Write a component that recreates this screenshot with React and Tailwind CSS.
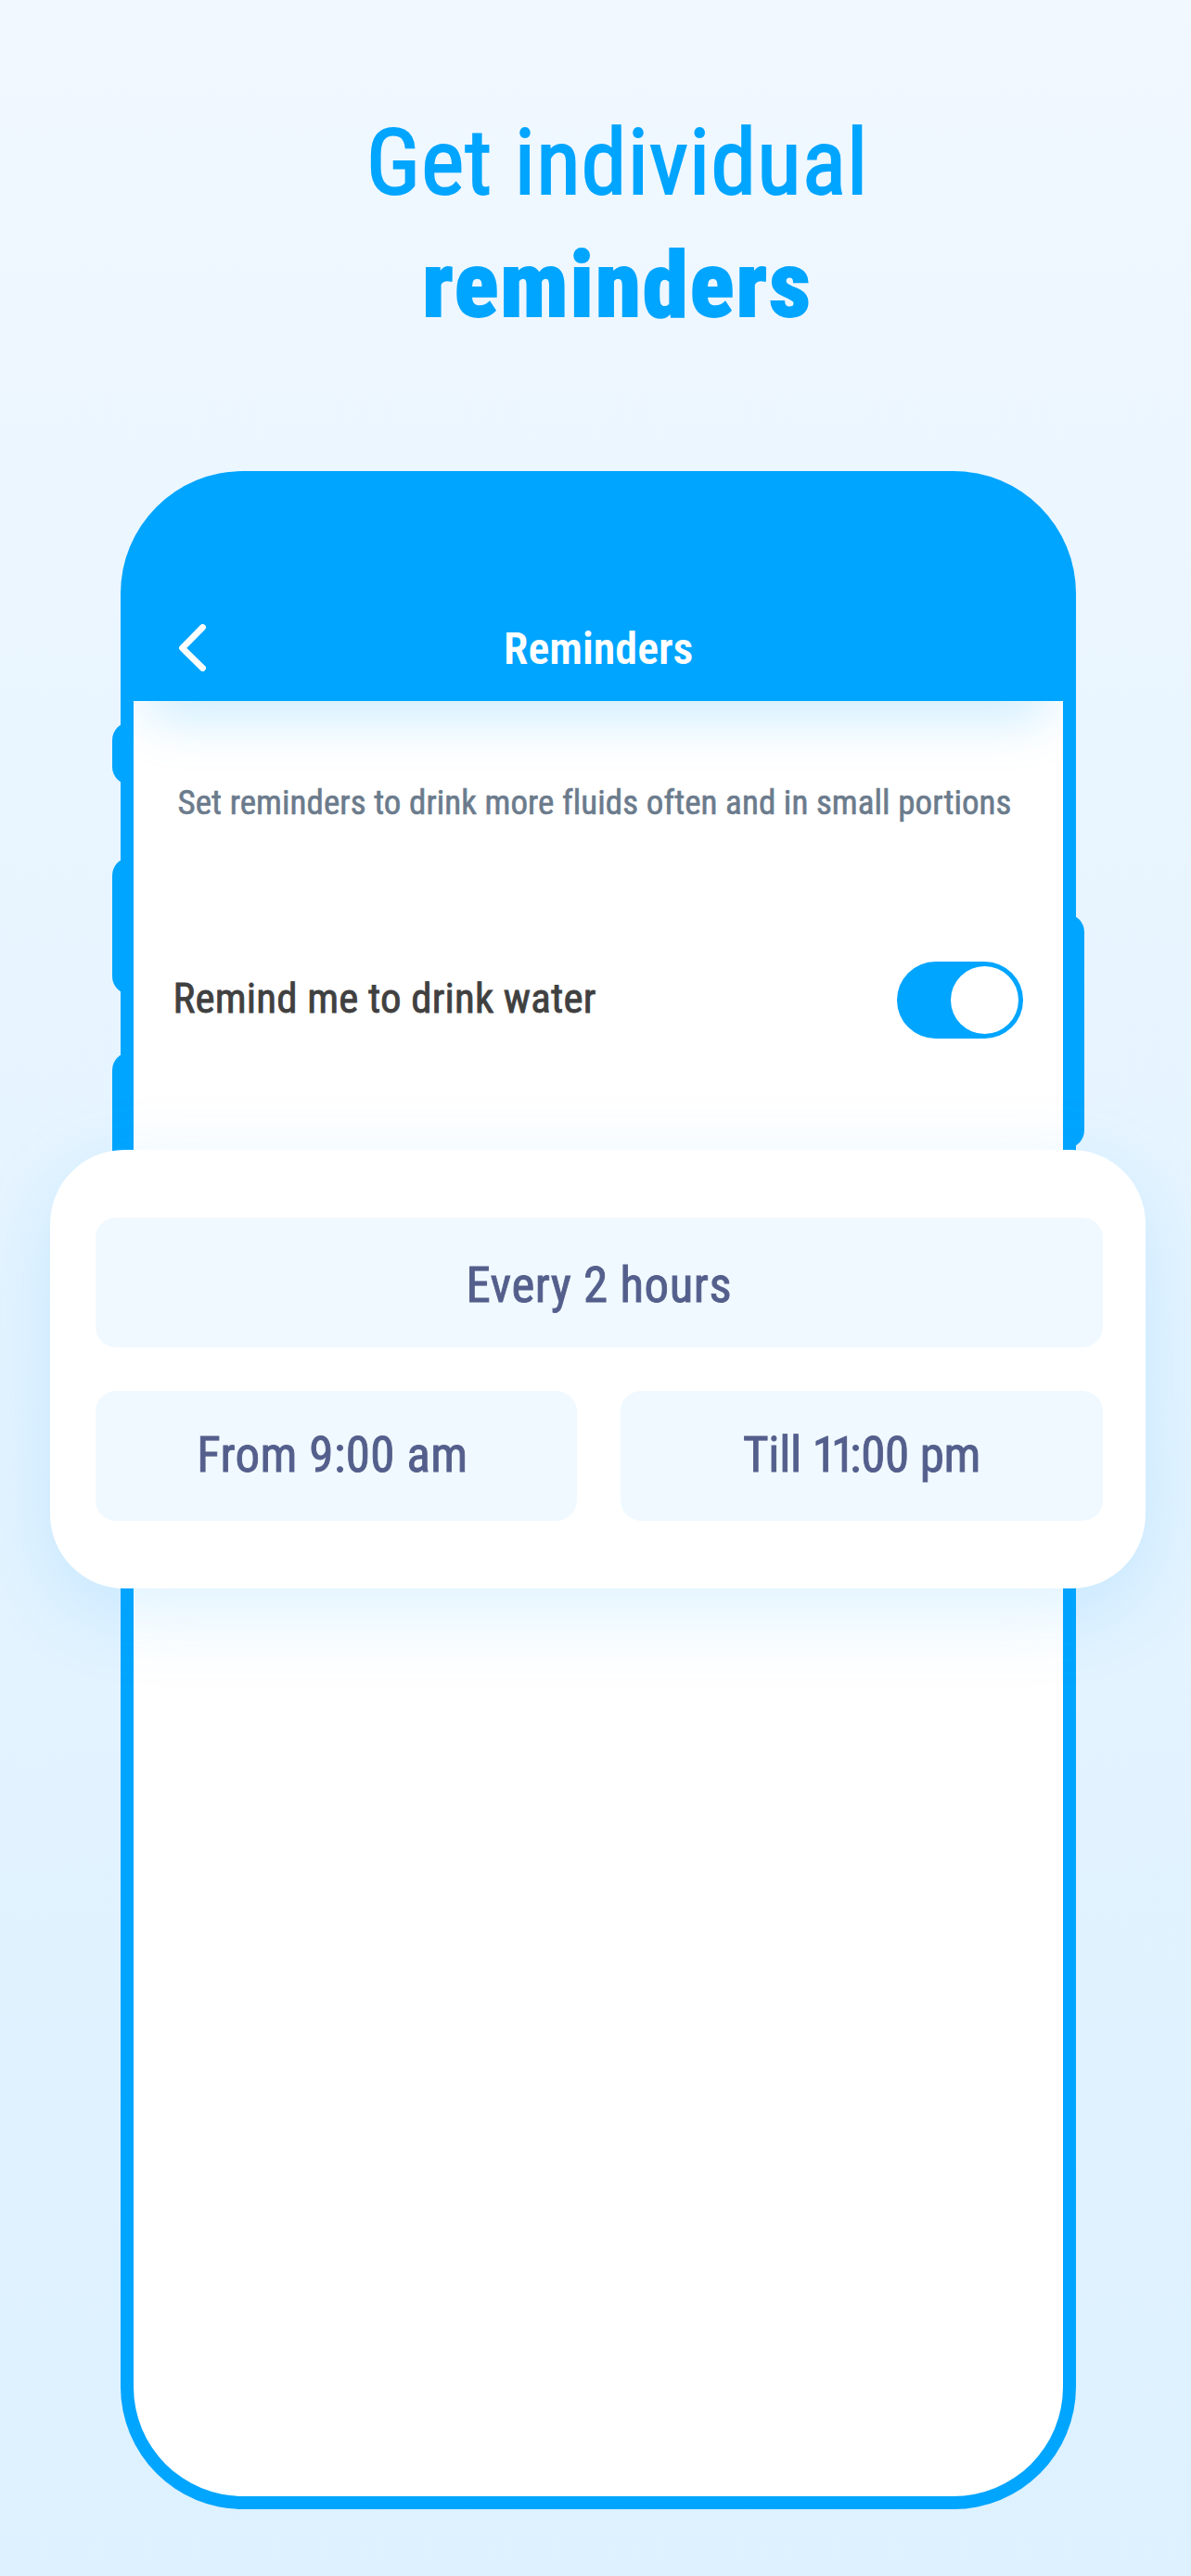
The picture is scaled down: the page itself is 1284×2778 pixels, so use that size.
import { useState } from 'react'

function SideButton({ className }) {
    return <span className={`absolute w-10 rounded-[19px] bg-[#00a5ff] ${className}`} />
}

function Field({ children, className = '' }) {
    return (
        <button className={`h-[140px] flex items-center justify-center rounded-[22px] bg-[#f0f9ff] text-[53px] font-normal text-[#545f8c] [-webkit-text-stroke:0.9px_#545f8c] ${className}`}>
            {children}
        </button>
    )
}

export default function App() {
    const [enabled, setEnabled] = useState(true)

    return (
        <div className="w-[1284px] h-[2778px] overflow-hidden bg-linear-to-b from-[#f1f8ff] via-[#e8f5ff] via-35% to-[#ddf1ff] font-['Roboto_Condensed','Roboto',sans-serif]">
            {/* Headline */}
            <h1 className="pt-[109px] pl-[47px] text-center text-[99px] leading-[132px] text-[#00a5ff] font-normal tracking-[0.7px] [-webkit-text-stroke:1.8px_#00a5ff]">
                Get individual
                <br />
                <span className="font-extrabold tracking-[2px]">reminders</span>
            </h1>

            {/* Phone */}
            <div className="relative mt-[135px] ml-[129.5px] w-[1030px] h-[2198px]">
                <SideButton className="-left-[8.5px] top-[271px] h-[67px]" />
                <SideButton className="-left-[8.5px] top-[417px] h-[147px]" />
                <SideButton className="-left-[8.5px] top-[627px] h-[149px]" />
                <SideButton className="-right-[9px] top-[478px] h-[252px]" />

                <div className="relative h-full flex flex-col rounded-[132px] bg-[#00a5ff] px-[14px] pb-[14.5px]">
                    <header className="h-[248px] flex flex-col justify-end pb-[26px]">
                        <div className="flex items-center h-[60px] pl-[49.5px] pr-[77px]">
                            <svg className="w-[29px] h-[51px] mb-[4px]" viewBox="0 0 29 51" fill="none" stroke="white" strokeWidth="6.8" strokeLinecap="round" strokeLinejoin="round">
                                <path d="M25.5 3.5L3.5 25.8L25.5 47.5" />
                            </svg>
                            <h2 className="flex-1 text-center text-[48px] leading-[60px] font-semibold text-white">Reminders</h2>
                        </div>
                    </header>

                    <main className="flex-1 rounded-b-[118px] bg-white">
                        <section className="relative h-[484px] overflow-hidden pt-[86px]">
                            <span className="absolute left-0 right-0 -top-24 h-24 shadow-[0_36px_56px_-16px_rgba(0,165,255,0.2)]" />
                            <p className="relative pr-[7px] text-center text-[37px] leading-[48px] tracking-[0.06px] text-[#6b7b8c] [-webkit-text-stroke:0.6px_#6b7b8c]">
                                Set reminders to drink more fluids often and in small portions
                            </p>
                            <div className="mt-[147px] flex items-center justify-between pl-[43px] pr-[42.5px]">
                                <span className="mb-[3px] text-[45px] leading-[60px] tracking-[0.15px] text-[#404040] [-webkit-text-stroke:0.8px_#404040]">Remind me to drink water</span>
                                <button
                                    onClick={() => setEnabled(!enabled)}
                                    className={`w-[136.5px] h-[83px] flex items-center rounded-full px-[5px] ${enabled ? 'justify-end bg-[#00a5ff]' : 'justify-start bg-gray-200'}`}
                                >
                                    <span className="w-[73px] h-[73px] rounded-full bg-white" />
                                </button>
                            </div>
                        </section>

                        {/* Schedule card, wider than the phone */}
                        <section className="relative -ml-[89.5px] -mr-[89.5px] h-[473px] flex flex-col gap-[47px] rounded-[80px] bg-white pl-[48.5px] pr-[46px] pt-[73px] shadow-[0_24px_90px_rgba(0,165,255,0.14)]">
                            <Field className="w-full pt-[7px] tracking-[0.5px]">Every 2 hours</Field>
                            <div className="grid grid-cols-2 gap-[47px]">
                                <Field className="pr-2 tracking-[0.4px]">From 9:00 am</Field>
                                <Field className="tracking-[-0.3px]">
                                    <span>Till <span className="tracking-[-6px]">11</span>:00 pm</span>
                                </Field>
                            </div>
                        </section>
                    </main>
                </div>
            </div>
        </div>
    )
}
